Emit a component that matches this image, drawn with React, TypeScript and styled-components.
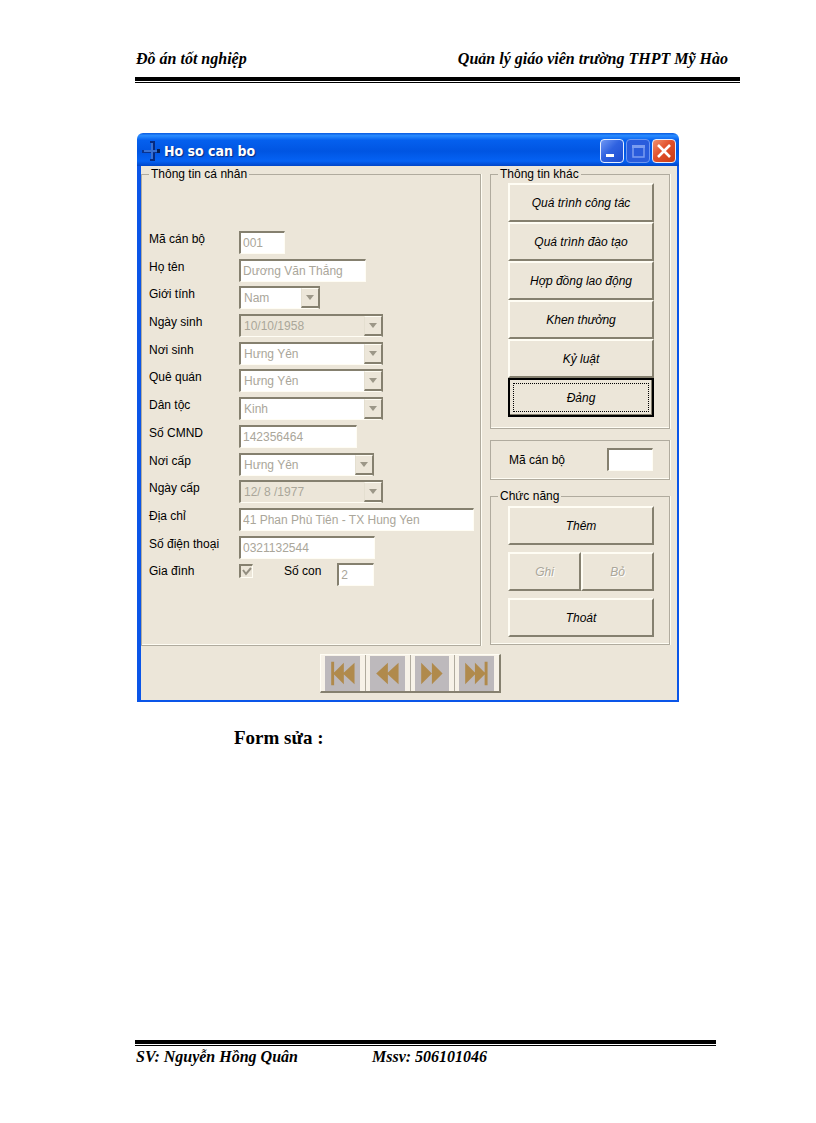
import React, { useId } from 'react';
import styled, { createGlobalStyle, css } from 'styled-components';

const face = '#ece6d9';
const shade = '#85806f';
const muted = '#aaa69a';
const ui = '"Liberation Sans", Arial, sans-serif';

const GlobalStyle = createGlobalStyle`
  *, *::before, *::after { box-sizing: border-box; }
  body { margin: 0; background: #fff; color: #000; }
`;

const Page = styled.div`
  min-height: 100vh;
  padding: 48px 76px 55px 135px;
  display: flex;
  flex-direction: column;
  font-family: "Liberation Serif", "Times New Roman", serif;
`;

const Running = styled.div`
  display: flex;
  font-size: 16px;
  line-height: 22px;
  font-style: italic;
  font-weight: bold;
`;

const PageHeader = styled(Running).attrs({ as: 'header' })`
  justify-content: space-between;
  padding: 0 12px 7px 1px;
`;

const PageFooter = styled(Running).attrs({ as: 'footer' })`
  gap: 74px;
  padding: 0 1px;
`;

const Rule = styled.div<{ $inset?: number }>`
  height: 6px;
  margin-right: ${p => p.$inset ?? 0}px;
  border-top: 4px solid #000;
  border-bottom: 1px solid #000;
`;

const Main = styled.main`
  flex: 1;
  padding: 50px 0 0 2px;
`;

const Caption = styled.h2`
  margin: 25px 0 0 97px;
  font-size: 19px;
  line-height: 22px;
  font-weight: bold;
`;

const Window = styled.section`
  max-width: 542px;
  font-family: ${ui};
  font-size: 12px;
  line-height: 16px;
`;

const TitleBar = styled.div`
  display: flex;
  align-items: center;
  height: 33px;
  padding: 2px 3px 0 4px;
  border-radius: 6px 6px 0 0;
  background: linear-gradient(#0a5ae0, #2a8cff 8%, #0560ee 22%, #0055e2 55%, #0562f4 85%, #0045c8);
  color: #fff;
`;

const Title = styled.h1`
  flex: 1;
  margin: 0 0 0 3px;
  font-family: "DejaVu Sans Condensed", "Open Sans", sans-serif;
  font-size: 14px;
  line-height: 20px;
  font-weight: bold;
  text-shadow: 1px 1px 1px #0a2a80;
`;

const CaptionButtons = styled.div`
  display: flex;
  gap: 2px;
`;

const CaptionButton = styled.button<{ $tone: 'blue' | 'faded' | 'red' }>`
  width: 24px;
  height: 24px;
  padding: 0;
  display: grid;
  place-items: center;
  border: 1px solid ${p => (p.$tone === 'faded' ? '#6d96f0' : '#e6eeff')};
  border-radius: 4px;
  color: ${p => (p.$tone === 'faded' ? '#7b9cf0' : '#fff')};
  background: ${p =>
    p.$tone === 'red'
      ? 'linear-gradient(135deg, #f0916f, #e2502c 45%, #c83c14)'
      : p.$tone === 'faded'
        ? '#2a5cdc'
        : 'linear-gradient(135deg, #6f98f4, #2f62e0 45%, #1c4cd0)'};
`;

const Client = styled.div`
  padding: 0 7px 7px 0;
  border: solid #0a55e8;
  border-width: 0 2px 2px 4px;
  background: ${face};
`;

const Columns = styled.div`
  display: flex;
  gap: 9px;
`;

const Side = styled.div`
  flex: 0 0 180px;
  display: flex;
  flex-direction: column;
`;

const Group = styled.fieldset<{ $bottom?: number }>`
  min-width: 0;
  margin: 0;
  padding: 0 7px ${p => p.$bottom ?? 0}px;
  border: 1px solid #b0ab9e;
  box-shadow: inset 0 -1px #fffdf4, 1px 0 #fffdf4;
`;

const PersonalGroup = styled(Group)`
  flex: 1;
`;

const Legend = styled.legend`
  padding: 0 2px;
  line-height: 16px;
`;

const Rows = styled.div`
  display: grid;
  grid-template-rows: repeat(13, 1fr);
  height: 360px;
  margin: 49px 0 54px;
`;

const Row = styled.div`
  display: flex;
  align-items: flex-start;
`;

const Label = styled.label`
  flex: 0 0 90px;
`;

const ChildLabel = styled.label`
  margin: 0 16px 0 31px;
`;

const sunken = css`
  border: solid;
  border-width: 2px 1px 1px 2px;
  border-color: ${shade} #fffdf4 #fffdf4 ${shade};
  border-radius: 0;
`;

const TextBox = styled.input<{ $w: number }>`
  ${sunken}
  width: ${p => p.$w}px;
  height: 23px;
  padding: 0 2px;
  background: #fff;
  color: ${muted};
  font: 12px/16px ${ui};
`;

const Combo = styled.div<{ $w: number }>`
  position: relative;
  width: ${p => p.$w}px;
  height: 23px;
`;

const Select = styled.select<{ $flat?: boolean }>`
  ${sunken}
  appearance: none;
  width: 100%;
  height: 100%;
  padding: 0 20px 0 3px;
  border-right: 2px solid ${shade};
  background: ${p => (p.$flat ? face : '#fff')};
  color: ${muted};
  opacity: 1;
  font: 12px/16px ${ui};
`;

const Drop = styled.span`
  position: absolute;
  top: 2px;
  right: 1px;
  bottom: 1px;
  width: 18px;
  display: grid;
  place-items: center;
  border: solid;
  border-width: 1px 1px 2px 1px;
  border-color: #fffdf4 ${shade} ${shade} #e4dfd0;
  background: ${face};
  pointer-events: none;
`;

const Tick = styled.input`
  ${sunken}
  appearance: none;
  width: 14px;
  height: 14px;
  margin: 1px 0 0;
  background: ${face};
  &:checked {
    background: ${face} url("data:image/svg+xml,%3Csvg xmlns='http://www.w3.org/2000/svg' viewBox='0 0 11 11'%3E%3Cpath d='M2 4l3 4 5-6' fill='none' stroke='%23938e80' stroke-width='2'/%3E%3C/svg%3E") center / contain no-repeat;
  }
`;

const ButtonStack = styled.div<{ $gap?: number; $top: number }>`
  display: flex;
  flex-direction: column;
  gap: ${p => p.$gap ?? 0}px;
  margin: ${p => p.$top}px 8px 0 10px;
`;

const Pair = styled.div`
  display: grid;
  grid-template-columns: 1fr 1fr;
`;

const PushButton = styled.button<{ $focused?: boolean }>`
  height: 39px;
  padding: 0;
  border: solid;
  border-width: 2px;
  border-color: #fffdf4 ${shade} ${shade} #fffdf4;
  border-radius: 0;
  background: ${face};
  color: #000;
  font: italic 12px/16px ${ui};
  &:disabled { color: ${muted}; text-shadow: 1px 1px #fff; }
  ${p =>
    p.$focused &&
    css`
      border-color: #000;
      box-shadow: inset -1px -1px ${shade};
      outline: 1px dotted #000;
      outline-offset: -6px;
    `}
`;

const SearchGroup = styled(Group)`
  display: flex;
  align-items: flex-start;
  justify-content: space-between;
  height: 40px;
  margin: 11px 0 8px;
  padding: 7px 16px 0 18px;
`;

const SearchLabel = styled.label`
  padding-top: 4px;
`;

const NavBar = styled.nav`
  display: flex;
  width: 181px;
  height: 39px;
  margin: 8px 0 0 179px;
  border: solid;
  border-width: 1px 2px 2px 1px;
  border-color: #fffdf4 ${shade} ${shade} #fffdf4;
`;

const NavButton = styled.button`
  flex: 1;
  padding: 1px 5px 0 4px;
  border: 0;
  border-right: 1px solid #b0ab9e;
  background: #f7f2e8;
  &:last-child { border-right: 0; }
  svg { display: block; width: 100%; height: 35px; background: #bdb9bc; }
`;

type ComboProps = { id: string; value: string; w: number; flat?: boolean };

function ComboBox({ id, value, w, flat }: ComboProps) {
  return (
    <Combo $w={w}>
      <Select id={id} disabled $flat={flat} defaultValue={value}>
        <option>{value}</option>
      </Select>
      <Drop>
        <svg width="8" height="5" viewBox="0 0 8 5">
          <path d="M0 0h8L4 5z" fill="#9c9788" />
        </svg>
      </Drop>
    </Combo>
  );
}

type Field = { label: string; value: string; w: number; kind: 'text' | 'select' | 'date' };

const fields: Field[] = [
  { label: 'Mã cán bộ', value: '001', w: 46, kind: 'text' },
  { label: 'Họ tên', value: 'Dương Văn Thắng', w: 127, kind: 'text' },
  { label: 'Giới tính', value: 'Nam', w: 81, kind: 'select' },
  { label: 'Ngày sinh', value: '10/10/1958', w: 144, kind: 'date' },
  { label: 'Nơi sinh', value: 'Hưng Yên', w: 144, kind: 'select' },
  { label: 'Quê quán', value: 'Hưng Yên', w: 144, kind: 'select' },
  { label: 'Dân tộc', value: 'Kinh', w: 144, kind: 'select' },
  { label: 'Số CMND', value: '142356464', w: 118, kind: 'text' },
  { label: 'Nơi cấp', value: 'Hưng Yên', w: 135, kind: 'select' },
  { label: 'Ngày cấp', value: '12/ 8 /1977', w: 144, kind: 'date' },
  { label: 'Địa chỉ', value: '41 Phan Phù Tiên - TX Hung Yen', w: 235, kind: 'text' },
  { label: 'Số điện thoại', value: '0321132544', w: 136, kind: 'text' },
];

const sections = ['Quá trình công tác', 'Quá trình đào tạo', 'Hợp đồng lao động', 'Khen thưởng', 'Kỷ luật', 'Đảng'];

const moves = [
  { label: 'Bản ghi đầu', d: 'M6 6h3v24H6zM8 18L19 7v22zM18 18L30 7v22z' },
  { label: 'Bản ghi trước', d: 'M6 18L18 7v22zM17 18L29 7v22z' },
  { label: 'Bản ghi sau', d: 'M6 7l11 11L6 29zM17 7l11 11-11 11z' },
  { label: 'Bản ghi cuối', d: 'M6 7l11 11L6 29zM16 7l11 11-11 11zM26 6h3v24h-3z' },
];

function FieldRow({ field }: { field: Field }) {
  const id = useId();
  return (
    <Row>
      <Label htmlFor={id}>{field.label}</Label>
      {field.kind === 'text' ? (
        <TextBox id={id} $w={field.w} disabled defaultValue={field.value} />
      ) : (
        <ComboBox id={id} w={field.w} value={field.value} flat={field.kind === 'date'} />
      )}
    </Row>
  );
}

export default function App() {
  return (
    <>
      <GlobalStyle />
      <Page>
        <PageHeader>
          <span>Đồ án tốt nghiệp</span>
          <span>Quản lý giáo viên trường THPT Mỹ Hào</span>
        </PageHeader>
        <Rule />
        <Main>
          <Window>
            <TitleBar>
              <svg width="20" height="22" viewBox="0 0 20 22" aria-hidden="true">
                <path d="M9 2h4v18H9" fill="none" stroke="#062a80" strokeWidth="2" />
                <path d="M1 10h18v3H1z" fill="#0a3490" />
                <path d="M10 3h2v7h4v2h-4v7h-2v-7H3v-2h7z" fill="#3a70d0" />
                <path d="M16 9h3v4h-3z" fill="#051c50" />
              </svg>
              <Title>Ho so can bo</Title>
              <CaptionButtons>
                <CaptionButton $tone="blue" aria-label="Thu nhỏ">
                  <svg width="16" height="16"><path d="M2 11h8v3H2z" fill="currentColor" /></svg>
                </CaptionButton>
                <CaptionButton $tone="faded" aria-label="Phóng to">
                  <svg width="16" height="16">
                    <path d="M3 3h11v11H3z" fill="none" stroke="currentColor" strokeWidth="1.500" />
                    <path d="M2 2h13v3H2z" fill="currentColor" />
                  </svg>
                </CaptionButton>
                <CaptionButton $tone="red" aria-label="Đóng">
                  <svg width="16" height="16"><path d="M2 2l12 12M14 2L2 14" stroke="currentColor" strokeWidth="2.600" /></svg>
                </CaptionButton>
              </CaptionButtons>
            </TitleBar>
            <Client>
              <Columns>
                <PersonalGroup>
                  <Legend>Thông tin cá nhân</Legend>
                  <Rows>
                    {fields.map(f => (
                      <FieldRow key={f.label} field={f} />
                    ))}
                    <Row>
                      <Label htmlFor="family">Gia đình</Label>
                      <Tick id="family" type="checkbox" disabled defaultChecked />
                      <ChildLabel htmlFor="children">Số con</ChildLabel>
                      <TextBox id="children" $w={37} disabled defaultValue="2" />
                    </Row>
                  </Rows>
                </PersonalGroup>
                <Side>
                  <Group $bottom={11}>
                    <Legend>Thông tin khác</Legend>
                    <ButtonStack $top={1}>
                      {sections.map(s => (
                        <PushButton key={s} $focused={s === 'Đảng'}>{s}</PushButton>
                      ))}
                    </ButtonStack>
                  </Group>
                  <SearchGroup as="div">
                    <SearchLabel htmlFor="code">Mã cán bộ</SearchLabel>
                    <TextBox id="code" $w={46} />
                  </SearchGroup>
                  <Group $bottom={7}>
                    <Legend>Chức năng</Legend>
                    <ButtonStack $gap={7} $top={2}>
                      <PushButton>Thêm</PushButton>
                      <Pair>
                        <PushButton disabled>Ghi</PushButton>
                        <PushButton disabled>Bỏ</PushButton>
                      </Pair>
                      <PushButton>Thoát</PushButton>
                    </ButtonStack>
                  </Group>
                </Side>
              </Columns>
              <NavBar>
                {moves.map(m => (
                  <NavButton key={m.label} aria-label={m.label}>
                    <svg viewBox="0 0 35 36"><path d={m.d} fill="#b08a4c" /></svg>
                  </NavButton>
                ))}
              </NavBar>
            </Client>
          </Window>
          <Caption>Form sửa :</Caption>
        </Main>
        <Rule $inset={24} />
        <PageFooter>
          <span>SV: Nguyễn Hồng Quân</span>
          <span>Mssv: 506101046</span>
        </PageFooter>
      </Page>
    </>
  );
}
